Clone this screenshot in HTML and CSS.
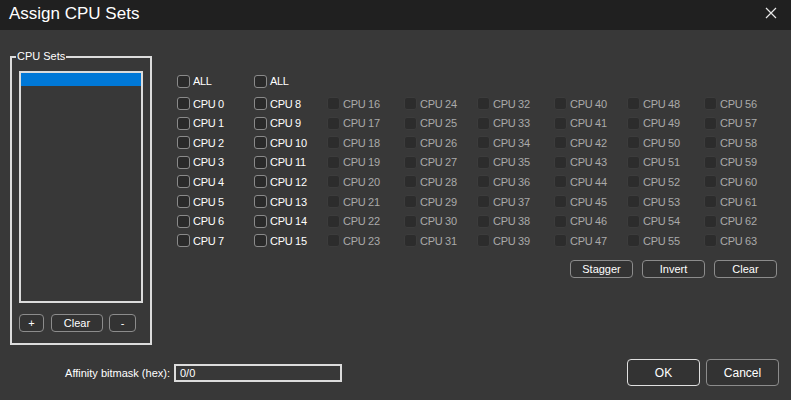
FILE: index.html
```html
<!DOCTYPE html>
<html>
<head>
<meta charset="utf-8">
<link rel="stylesheet" href="styles.css">
</head>
<body>
<div class="window">
  <div class="titlebar">
    <span class="title">Assign CPU Sets</span>
    <svg class="close" width="12" height="12" viewBox="0 0 12 12"><path d="M1 1L11 11M11 1L1 11" stroke="#e8e8e8" stroke-width="1.2" fill="none"/></svg>
  </div>
  <div class="content">
    <div class="main">
      <fieldset class="group">
        <legend>CPU Sets</legend>
        <div class="listbox"><div class="list-sel"></div></div>
        <div class="list-btns">
          <button class="btn btn-plus">+</button>
          <button class="btn btn-clear">Clear</button>
          <button class="btn btn-minus">-</button>
        </div>
      </fieldset>
      <div class="cpus">
        <div class="all-row">
          <label class="cb"><span class="box"></span>ALL</label>
          <label class="cb"><span class="box"></span>ALL</label>
        </div>
        <div class="grid" id="grid"></div>
        <div class="actions">
          <button class="btn btn-act">Stagger</button>
          <button class="btn btn-act">Invert</button>
          <button class="btn btn-act">Clear</button>
        </div>
      </div>
    </div>
    <div class="bottom">
      <span class="mask-label">Affinity bitmask (hex):</span>
      <div class="mask-input">0/0</div>
      <div class="spacer"></div>
      <button class="btn btn-dlg btn-default">OK</button>
      <button class="btn btn-dlg">Cancel</button>
    </div>
  </div>
</div>
<script>
  var g = document.getElementById('grid');
  for (var i = 0; i < 64; i++) {
    var l = document.createElement('label');
    l.className = 'cb' + (i >= 16 ? ' disabled' : '');
    l.innerHTML = '<span class="box"></span>CPU ' + i;
    g.appendChild(l);
  }
</script>
</body>
</html>
```
FILE: styles.css
```css
* { box-sizing: border-box; }
html, body { margin: 0; padding: 0; }
body {
  width: 791px;
  height: 400px;
  background: #383838;
  font-family: "Liberation Sans", Arial, sans-serif;
  font-size: 11px;
  color: #fff;
  overflow: hidden;
}
.window { width: 791px; height: 400px; display: flex; flex-direction: column; }
.titlebar {
  height: 30px;
  background: #202020;
  display: flex;
  align-items: center;
  padding: 0 14px 0 9px;
  flex: none;
}
.title { font-size: 17px; color: #fff; flex: 1; margin-top: -2px; }
.close { display: block; margin-top: -4px; }
.content { flex: 1; display: flex; flex-direction: column; }
.main { display: flex; padding-top: 20px; height: 313px; }
.group {
  margin: 0 0 0 10px;
  width: 142px;
  height: 295px;
  border: 2px solid #dcdcdc;
  padding: 8px 7px 9px 7px;
  display: flex;
  flex-direction: column;
}
.group legend {
  padding: 0 1px;
  margin-left: -3px;
  font-size: 11px;
  line-height: 13px;
  color: #fff;
}
.listbox {
  height: 232px;
  border: 2px solid #dcdcdc;
  background: #383838;
  padding: 0;
  flex: none;
}
.list-sel { height: 13px; background: #0078d7; }
.list-btns { display: flex; margin-top: 11px; gap: 7px; }
.btn {
  font-family: "Liberation Sans", Arial, sans-serif;
  font-size: 11px;
  color: #fff;
  background: #333333;
  border: 1px solid #8c8c8c;
  border-radius: 4px;
  padding: 0;
  height: 18px;
  display: flex;
  align-items: center;
  justify-content: center;
}
.btn-plus { width: 25px; }
.btn-clear { width: 52px; }
.btn-minus { width: 27px; margin-left: -1px; }
.cpus { margin-left: 25px; width: 600px; padding-top: 21px; }
.all-row { display: grid; grid-template-columns: 77px 73px; height: 20px; margin-bottom: 3px; }
.grid {
  display: grid;
  grid-template-columns: repeat(4, 77px 73px);
  grid-template-rows: repeat(8, 19.55px);
  grid-auto-flow: column;
}
.cb { display: flex; align-items: center; white-space: nowrap; color: #fff; letter-spacing: -0.3px; }
.box {
  width: 13px;
  height: 13px;
  border: 1px solid #8a8a8a;
  border-radius: 3px;
  background: #2a2a2a;
  margin-right: 3px;
  flex: none;
}
.cb.disabled { color: #aaaaaa; }
.cb.disabled .box { border-color: #3c3c3c; background: #2c2c2c; }
.actions { display: flex; justify-content: flex-end; gap: 9px; margin-top: 10px; }
.btn-act { width: 63px; }
.bottom { display: flex; align-items: center; height: 27px; margin-top: 16px; padding: 0 12px 0 10px; }
.mask-label { width: 160px; text-align: right; margin-right: 4px; }
.mask-input {
  width: 168px;
  height: 18px;
  border: 2px solid #dcdcdc;
  background: #383838;
  padding: 0 4px;
  line-height: 14px;
}
.spacer { flex: 1; }
.btn-dlg { width: 73px; height: 27px; font-size: 12px; }
.btn-dlg + .btn-dlg { margin-left: 6px; }
.btn-default { border-color: #e0e0e0; }
```
